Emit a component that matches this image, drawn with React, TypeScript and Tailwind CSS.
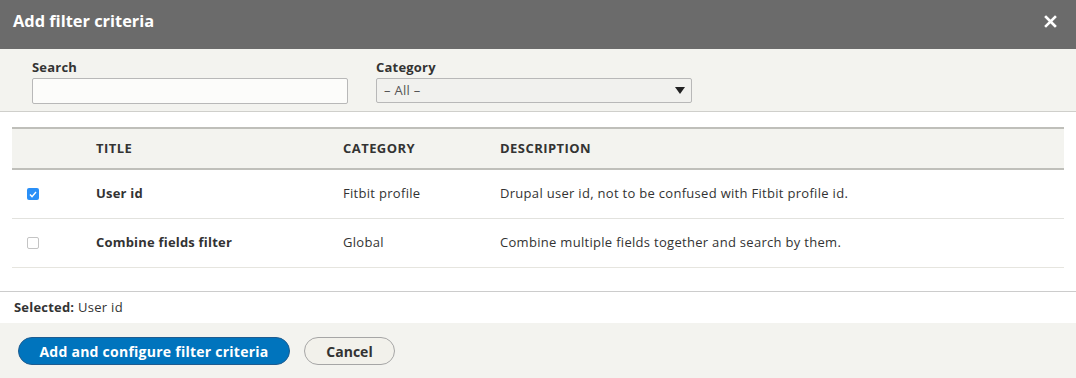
import React from "react";

export default function App() {
  return (
    <div className="w-[1076px] h-[378px] bg-white text-[#333] overflow-hidden flex flex-col" style={{ fontFamily: '"Open Sans", "DejaVu Sans", sans-serif' }}>
      {/* Title bar */}
      <div className="h-[49px] bg-[#6b6b6b] flex items-center justify-between pl-[13px] pr-[19px] pb-[6px] shrink-0">
        <div className="text-white text-[16.4px] font-bold">Add filter criteria</div>
        <svg width="13" height="13" viewBox="0 0 13 13">
          <path d="M2 2 L11 11 M11 2 L2 11" stroke="white" strokeWidth="2.6" strokeLinecap="square" />
        </svg>
      </div>

      {/* Filters */}
      <div className="h-[63px] bg-[#f3f3ef] border-b border-[#cfcfcb] flex gap-[28px] pl-[32px] pt-[9px] shrink-0">
        <div className="flex flex-col">
          <label className="text-[13px] font-bold leading-[18px] text-[#333] tracking-[0.2px]">Search</label>
          <div className="mt-[2px] w-[316px] h-[26px] bg-[#fcfcfa] border border-[#b8b8b8] rounded-[2px]" />
        </div>
        <div className="flex flex-col">
          <label className="text-[13px] font-bold leading-[18px] text-[#333] tracking-[0.2px]">Category</label>
          <div className="mt-[2px] w-[316px] h-[25px] bg-[#f1f1ee] border border-[#b8b8b8] rounded-[2px] flex items-center justify-between pl-[7px] pr-[6px]">
            <span className="text-[13px] text-[#555] tracking-[0.3px]">– All –</span>
            <svg width="10" height="7" viewBox="0 0 10 7"><path d="M0 0 H10 L5 7 Z" fill="#222" /></svg>
          </div>
        </div>
      </div>

      {/* Table */}
      <div className="px-[12px] pt-[15px] shrink-0">
        <div className="border-t-2 border-[#bfbfba]">
          <div className="h-[41px] bg-[#f3f3ef] border-b-2 border-[#bfbfba] flex items-center text-[13px] font-bold text-[#333] tracking-[0.45px]">
            <div className="w-[84px]" />
            <div className="w-[247px]">TITLE</div>
            <div className="w-[157px]">CATEGORY</div>
            <div>DESCRIPTION</div>
          </div>
          <div className="h-[49px] border-b border-[#e2e2de] flex items-center text-[13px] tracking-[0.3px]">
            <div className="w-[84px] pl-[15px]">
              <div className="w-[12px] h-[12px] rounded-[2px] bg-[#2a8ff7] flex items-center justify-center">
                <svg width="8" height="7" viewBox="0 0 8 7"><path d="M1 3.6 L3 5.6 L7 1" stroke="white" strokeWidth="1.4" fill="none" /></svg>
              </div>
            </div>
            <div className="w-[247px] font-bold tracking-[0.2px]">User id</div>
            <div className="w-[157px]">Fitbit profile</div>
            <div>Drupal user id, not to be confused with Fitbit profile id.</div>
          </div>
          <div className="h-[49px] border-b border-[#e6e5df] flex items-center text-[13px] tracking-[0.3px]">
            <div className="w-[84px] pl-[15px]">
              <div className="w-[12px] h-[12px] rounded-[2px] bg-white border border-[#c4c4c4]" />
            </div>
            <div className="w-[247px] font-bold tracking-[0.2px]">Combine fields filter</div>
            <div className="w-[157px]">Global</div>
            <div>Combine multiple fields together and search by them.</div>
          </div>
        </div>
      </div>

      <div className="mt-[23px] border-t border-[#cccccc] h-[32px] flex items-center pl-[14px] text-[13px] tracking-[0.3px] shrink-0">
        <span className="font-bold tracking-[0.2px]">Selected:</span>&nbsp;User id
      </div>

      {/* Footer */}
      <div className="flex-1 bg-[#f3f3ef] flex items-start gap-[14px] pl-[18px] pt-[14px]">
        <button className="h-[28px] w-[272px] rounded-full bg-[#0074bd] border border-[#1e5c90] text-white text-[14px] font-bold tracking-[0.25px]">
          Add and configure filter criteria
        </button>
        <button className="h-[28px] w-[91px] rounded-full bg-[#f2f1eb] border border-[#a6a6a6] text-[#333] text-[14px] font-bold">
          Cancel
        </button>
      </div>
    </div>
  );
}
